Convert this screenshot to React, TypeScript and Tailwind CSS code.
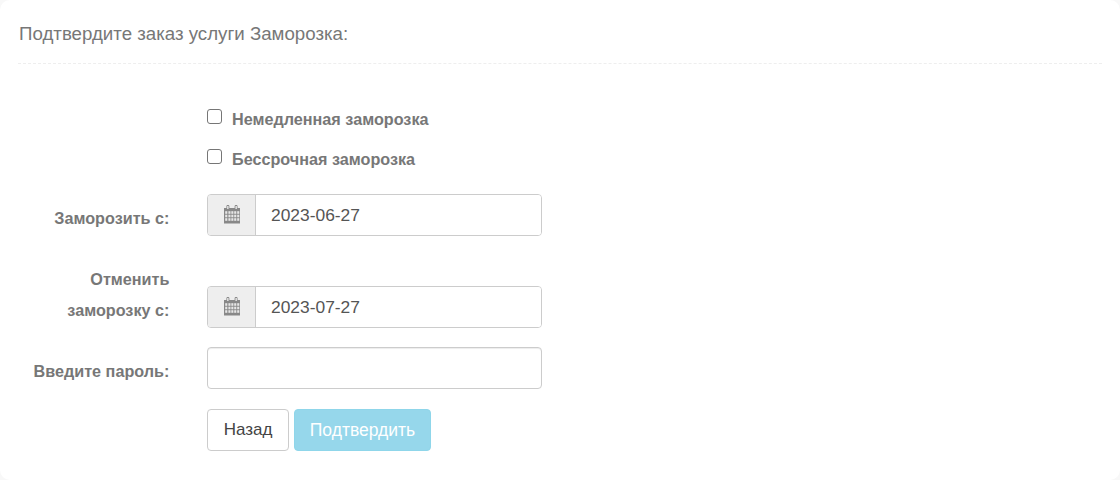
const font = "font-['Liberation_Sans',Arial,sans-serif]";

function CalendarIcon() {
  return (
    <svg width="18" height="19" viewBox="0 0 18 19" aria-hidden="true" className="mb-[2px]">
      <path fill="#888" d="M1 3h2.4V1.4a1.5 1.5 0 0 1 3 0V3h5.2V1.4a1.5 1.5 0 0 1 3 0V3H17v15.5H1z" />
      <g fill="#eee">
        <rect x="4.2" y="1" width="1.3" height="3" />
        <rect x="12.5" y="1" width="1.3" height="3" />
      </g>
      <g fill="#e6e6e6">
        {[6.2, 9.7, 13.2].map((y) =>
          [2.2, 5.4, 8.3, 11.2, 14.2].map((x) => (
            <rect key={`${x}-${y}`} x={x} y={y} width="2.1" height="2.6" />
          )),
        )}
      </g>
    </svg>
  );
}

function Label({ children, className }: { children: React.ReactNode; className?: string }) {
  return (
    <div className={`w-[152px] shrink-0 pr-[0.6px] text-right text-[16.2px] font-bold leading-[31px] text-[#777] ${className ?? ""}`}>
      {children}
    </div>
  );
}

function DateField({ value }: { value: string }) {
  return (
    <div className="flex h-[42px] w-[335px] overflow-hidden rounded-[4px] border border-[#ccc] shadow-[inset_0_1px_1px_rgba(0,0,0,0.075)]">
      <div className="flex w-[48px] shrink-0 items-center justify-center border-r border-[#ccc] bg-[#eee]">
        <CalendarIcon />
      </div>
      <div className="flex flex-1 items-center bg-white pl-[15px] text-[17.4px] text-[#555]">{value}</div>
    </div>
  );
}

function Check({ label }: { label: string }) {
  return (
    <div className="flex h-[40px] items-center">
      <span className="mt-[-4px] h-[15px] w-[15px] rounded-[3px] border border-[#767676] bg-white" />
      <span className="ml-[10px] mt-[2px] text-[16.2px] font-bold text-[#777]">{label}</span>
    </div>
  );
}

export default function App() {
  return (
    <div className={`${font} h-[480px] w-[1120px] overflow-hidden bg-[#f8f8f8]`}>
      <div className="h-[480px] rounded-[10px] bg-white px-[18px]">
        <div className="flex h-[64px] items-center border-b border-dashed border-[#eee] pl-[1px] pt-[6px] text-[18.7px] text-[#777]">
          Подтвердите заказ услуги Заморозка:
        </div>
        <div className="ml-[189px] mt-[34px]">
          <Check label="Немедленная заморозка" />
          <Check label="Бессрочная заморозка" />
        </div>
        <div className="mt-[16px] flex items-center gap-[37px]">
          <Label className="pt-[6px]">Заморозить с:</Label>
          <DateField value="2023-06-27" />
        </div>
        <div className="mt-[28px] flex items-end gap-[37px]">
          <Label className="pb-[2px]">
            Отменить
            <br />
            заморозку с:
          </Label>
          <DateField value="2023-07-27" />
        </div>
        <div className="mt-[19px] flex items-center gap-[37px]">
          <Label className="pt-[6px]">Введите пароль:</Label>
          <div className="h-[42px] w-[335px] rounded-[4px] border border-[#ccc] bg-white shadow-[inset_0_1px_1px_rgba(0,0,0,0.075)]" />
        </div>
        <div className="ml-[189px] mt-[20px] flex gap-[5px]">
          <button className="flex h-[42px] w-[82px] items-center justify-center rounded-[4px] border border-[#ccc] bg-white text-[17px] text-[#444]">
            Назад
          </button>
          <button className="flex h-[42px] w-[137px] items-center justify-center rounded-[4px] border border-[#8fd6ea] bg-[#96d7eb] text-[17.5px] text-white">
            Подтвердить
          </button>
        </div>
      </div>
    </div>
  );
}
